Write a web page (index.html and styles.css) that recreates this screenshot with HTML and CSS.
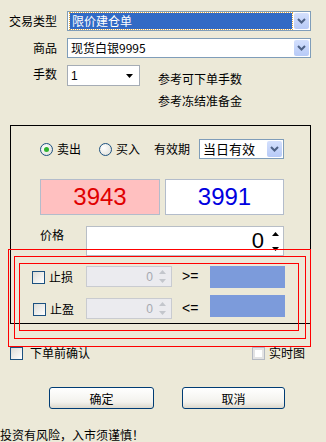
FILE: index.html
```html
<!DOCTYPE html>
<html lang="zh-CN">

<head>
    <meta charset="UTF-8">
    <title>限价建仓单</title>
    <link rel="stylesheet" href="styles.css">
</head>

<body>
    <section class="top">
        <div class="row">
            <span class="lbl">交易类型</span>
            <div class="combo wide">
                <span class="val sel">限价建仓单</span>
                <span class="drop">
                    <svg width="9" height="6" viewBox="0 0 9 6"><path d="M1 1l3.5 3.5L8 1" stroke="#4d6185" stroke-width="2" fill="none"/></svg>
                </span>
            </div>
        </div>
        <div class="row">
            <span class="lbl">商品</span>
            <div class="combo wide">
                <span class="val">现货白银9995</span>
                <span class="drop">
                    <svg width="9" height="6" viewBox="0 0 9 6"><path d="M1 1l3.5 3.5L8 1" stroke="#4d6185" stroke-width="2" fill="none"/></svg>
                </span>
            </div>
        </div>
        <div class="row row-qty">
            <span class="lbl">手数</span>
            <div class="qty">
                <span class="num">1</span>
                <svg width="7" height="4" viewBox="0 0 7 4"><path d="M0 0h7L3.5 4z" fill="#000"/></svg>
            </div>
            <div class="hints">
                <p>参考可下单手数</p>
                <p>参考冻结准备金</p>
            </div>
        </div>
    </section>

    <section class="panel">
        <div class="side-row">
            <span class="radio checked"></span>
            <span class="side-text">卖出</span>
            <span class="radio"></span>
            <span class="side-text short">买入</span>
            <span class="term">有效期</span>
            <div class="combo term-box">
                <span class="val">当日有效</span>
                <span class="drop">
                    <svg width="9" height="6" viewBox="0 0 9 6"><path d="M1 1l3.5 3.5L8 1" stroke="#4d6185" stroke-width="2" fill="none"/></svg>
                </span>
            </div>
        </div>

        <div class="quotes">
            <div class="quote sell">3943</div>
            <div class="quote buy">3991</div>
        </div>

        <div class="price-row">
            <span class="price-lbl">价格</span>
            <div class="spin big">
                <span class="spin-val">0</span>
                <span class="arrows">
                    <svg width="7" height="4" viewBox="0 0 7 4"><path d="M0 4h7L3.5 0z" fill="#000"/></svg>
                    <svg width="7" height="4" viewBox="0 0 7 4"><path d="M0 0h7L3.5 4z" fill="#000"/></svg>
                </span>
            </div>
        </div>

        <div class="stop-row">
            <span class="chk-lbl"><span class="check"></span>止损</span>
            <div class="spin off">
                <span class="spin-val">0</span>
                <span class="arrows">
                    <svg width="7" height="4" viewBox="0 0 7 4"><path d="M0 4h7L3.5 0z" fill="#c3c6cc"/></svg>
                    <svg width="7" height="4" viewBox="0 0 7 4"><path d="M0 0h7L3.5 4z" fill="#c3c6cc"/></svg>
                </span>
            </div>
            <span class="op">&gt;=</span>
            <span class="level"></span>
        </div>
        <div class="stop-row second">
            <span class="chk-lbl"><span class="check"></span>止盈</span>
            <div class="spin off">
                <span class="spin-val">0</span>
                <span class="arrows">
                    <svg width="7" height="4" viewBox="0 0 7 4"><path d="M0 4h7L3.5 0z" fill="#c3c6cc"/></svg>
                    <svg width="7" height="4" viewBox="0 0 7 4"><path d="M0 0h7L3.5 4z" fill="#c3c6cc"/></svg>
                </span>
            </div>
            <span class="op">&lt;=</span>
            <span class="level"></span>
        </div>
    </section>

    <section class="options">
        <label class="opt"><span class="check"></span>下单前确认</label>
        <label class="opt"><span class="check dim"></span>实时图</label>
    </section>

    <section class="buttons">
        <button class="btn ok">确定</button>
        <button class="btn cancel">取消</button>
    </section>

    <p class="warn">投资有风险，入市须谨慎！</p>

    <div class="frame frame-a"></div>
    <div class="frame frame-b"></div>
    <div class="frame frame-c"></div>
</body>

</html>
```

FILE: styles.css
```css
body {
    margin: 0;
    width: 326px;
    height: 442px;
    position: relative;
    overflow: hidden;
    background-color: #ece9d8;
    font-family: "Noto Sans CJK SC", sans-serif;
    font-size: 12px;
    line-height: 14px;
    color: #000;
}

p {
    margin: 0;
}

.top {
    box-sizing: border-box;
    height: 125px;
    padding-top: 11px;
}

.row {
    display: flex;
    align-items: center;
}

.row + .row {
    margin-top: 7px;
}

.row-qty {
    align-items: flex-start;
}

.lbl {
    width: 57px;
    margin-right: 10px;
    text-align: right;
}

.row-qty .lbl {
    margin-top: 2px;
}

.combo {
    box-sizing: border-box;
    height: 20px;
    border: 1px solid #7f9db9;
    background-color: #fff;
    display: flex;
    align-items: center;
}

.combo.wide {
    width: 244px;
}

.combo .val {
    flex: 1;
    padding-left: 3px;
}

.combo .sel {
    height: 16px;
    line-height: 16px;
    margin: 0 2px;
    padding-left: 2px;
    background-color: #316ac5;
    color: #fff;
    outline: 1px dotted #d9a441;
}

.drop {
    width: 15px;
    height: 16px;
    margin-right: 1px;
    border-radius: 2px;
    background: linear-gradient(#d4e0fd, #b7caf7);
    display: flex;
    align-items: center;
    justify-content: center;
}

.qty {
    box-sizing: border-box;
    width: 73px;
    height: 21px;
    border: 1px solid #a5acb5;
    background-color: #fff;
    display: flex;
    align-items: center;
    padding: 0 6px 0 3px;
}

.qty .num {
    flex: 1;
    font-family: "Liberation Sans", sans-serif;
}

.hints {
    margin: 7px 0 0 18px;
}

.hints p + p {
    margin-top: 8px;
}

.panel {
    box-sizing: border-box;
    width: 301px;
    height: 199px;
    margin-left: 10px;
    border: 1px solid #000;
    padding: 13px 0 0 29px;
}

.side-row {
    display: flex;
    align-items: center;
    height: 20px;
}

.radio {
    box-sizing: border-box;
    width: 13px;
    height: 13px;
    border: 1px solid #1c5180;
    border-radius: 50%;
    background: radial-gradient(circle at 35% 35%, #fff, #dcdcd5);
    margin-right: 4px;
    position: relative;
}

.radio.checked::after {
    content: "";
    position: absolute;
    left: 3px;
    top: 3px;
    width: 5px;
    height: 5px;
    border-radius: 50%;
    background-color: #2fb32f;
}

.side-text {
    margin-right: 18px;
}

.side-text.short {
    margin-right: 14px;
}

.term {
    margin-right: 9px;
}

.combo.term-box {
    width: 85px;
    font-size: 13px;
}

.quotes {
    display: flex;
    margin-top: 20px;
}

.quote {
    box-sizing: border-box;
    height: 36px;
    border: 1px solid #b3bccb;
    font-family: "Liberation Sans", sans-serif;
    font-size: 24px;
    line-height: 34px;
    text-align: center;
}

.quote.sell {
    width: 120px;
    background-color: #ffc0c0;
    color: #e00000;
}

.quote.buy {
    width: 119px;
    margin-left: 5px;
    background-color: #fff;
    color: #0000e0;
}

.price-row {
    display: flex;
    margin-top: 11px;
}

.price-lbl {
    width: 46px;
    margin-top: 2px;
}

.spin {
    box-sizing: border-box;
    border: 1px solid #b8bec6;
    background-color: #fff;
    display: flex;
    align-items: center;
    justify-content: flex-end;
}

.spin.big {
    width: 198px;
    height: 30px;
    padding-right: 4px;
}

.spin.big .spin-val {
    font-family: "Liberation Sans", sans-serif;
    font-size: 22px;
    margin-right: 8px;
}

.arrows {
    display: flex;
    flex-direction: column;
    justify-content: space-between;
    align-self: stretch;
    padding: 5px 0 4px;
}

.stop-row {
    display: flex;
    align-items: flex-start;
    margin: 10px 0 0 -8px;
}

.stop-row.second {
    margin-top: 7px;
}

.chk-lbl {
    width: 54px;
    display: flex;
    align-items: center;
    margin-top: 4px;
}

.stop-row.second .chk-lbl {
    margin-top: 7px;
    padding-left: 1px;
    width: 53px;
}

.check {
    box-sizing: border-box;
    width: 13px;
    height: 13px;
    border: 1px solid #1c5180;
    background: linear-gradient(135deg, #dcdcd7, #fff);
    margin-right: 4px;
}

.check.dim {
    border-color: #b4b9c2;
    background: #fff;
    box-shadow: inset 0 0 0 2px #e3e3e3;
}

.spin.off {
    width: 86px;
    height: 21px;
    border-color: #c9cbd0;
    background-color: #ebebef;
    padding-right: 5px;
}

.stop-row.second .spin.off {
    margin-top: 3px;
}

.spin.off .spin-val {
    font-family: "Liberation Sans", sans-serif;
    color: #a6a9b0;
    margin-right: 6px;
}

.spin.off .arrows {
    padding: 3px 0;
}

.op {
    width: 28px;
    padding-left: 10px;
    font-family: "Liberation Sans", sans-serif;
    font-size: 14px;
    line-height: 21px;
}

.stop-row.second .op {
    margin-top: 3px;
}

.level {
    width: 75px;
    height: 22px;
    background-color: #7c9bdb;
}

.options {
    display: flex;
    justify-content: space-between;
    margin-top: 22px;
    padding: 0 21px 0 10px;
}

.opt {
    display: flex;
    align-items: center;
}

.opt .check {
    margin-right: 7px;
}

.opt .check.dim {
    margin-right: 4px;
}

.buttons {
    display: flex;
    margin: 27px 0 0 49px;
}

.btn {
    box-sizing: border-box;
    height: 22px;
    border: 1px solid #003c74;
    border-radius: 3px;
    background: linear-gradient(#fff, #f3f2ed 70%, #dcd8cc);
    font-family: "Noto Sans CJK SC", sans-serif;
    font-size: 12px;
    color: #000;
    padding: 0;
}

.btn.ok {
    width: 105px;
}

.btn.cancel {
    width: 103px;
    margin-left: 28px;
}

.warn {
    margin-top: 19px;
}

.frame {
    position: absolute;
    box-sizing: border-box;
    border: 1px solid #f00;
}

.frame-a {
    left: 8px;
    top: 249px;
    width: 303px;
    height: 98px;
}

.frame-b {
    left: 14px;
    top: 256px;
    width: 292px;
    height: 83px;
}

.frame-c {
    left: 19px;
    top: 263px;
    width: 280px;
    height: 68px;
}
```
